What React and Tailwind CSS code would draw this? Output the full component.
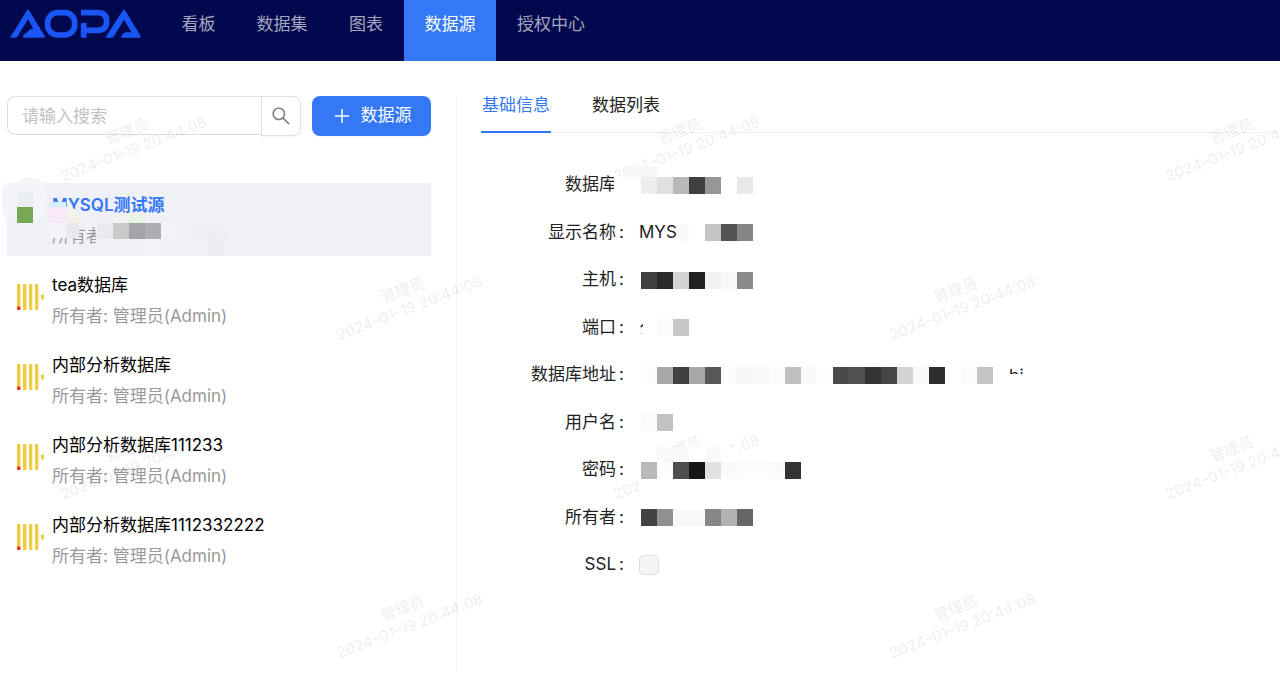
import { useState } from "react";
import { AiOutlinePlus, AiOutlineSearch } from "react-icons/ai";

const menus = [
  { name: "看板", width: "w-[75px]" },
  { name: "数据集", width: "w-[92px]" },
  { name: "图表", width: "w-[76px]" },
  { name: "数据源", width: "w-[92px]" },
  { name: "授权中心", width: "w-[110px]" },
];

const sources = [
  { id: 2, name: "tea数据库" },
  { id: 3, name: "内部分析数据库" },
  { id: 4, name: "内部分析数据库111233" },
  { id: 5, name: "内部分析数据库1112332222" },
];

const marks = [
  "left-[50px] top-[121px]",
  "left-[603px] top-[121px]",
  "left-[1155px] top-[121px]",
  "left-[326px] top-[280px]",
  "left-[879px] top-[280px]",
  "left-[50px] top-[439px]",
  "left-[603px] top-[439px]",
  "left-[1155px] top-[439px]",
  "left-[326px] top-[598px]",
  "left-[879px] top-[598px]",
];

// masked values, one class per block
const masks = {
  database: ["bg-[#eeeeee]", "bg-[#e0e0e0]", "bg-[#b8b8b8]", "bg-[#404040]", "bg-[#969696]", "bg-white", "bg-[#e8e8e8]"],
  name: ["bg-white", "bg-[#c4c4c4]", "bg-[#545454]", "bg-[#858585]"],
  host: ["bg-[#404040]", "bg-[#2a2a2a]", "bg-[#d4d4d4]", "bg-[#212121]", "bg-[#f2f2f2]", "bg-[#f8f8f8]", "bg-[#8a8a8a]"],
  port: ["bg-[#fbfbfb]", "bg-[#c8c8c8]"],
  url: [
    "bg-[#fcfcfc]", "bg-[#a8a8a8]", "bg-[#404040]", "bg-[#a8a8a8]", "bg-[#585858]", "bg-[#fcfcfc]",
    "bg-[#f7f7f7]", "bg-[#f9f9f9]", "bg-[#fcfcfc]", "bg-[#c1c1c1]", "bg-[#f9f9f9]", "bg-[#fefefe]",
    "bg-[#4a4a4a]", "bg-[#505050]", "bg-[#333333]", "bg-[#454545]", "bg-[#d3d3d3]", "bg-[#f9f9f9]",
    "bg-[#2d2d2d]", "bg-white", "bg-[#fbfbfb]", "bg-[#c4c4c4]", "bg-white",
  ],
  user: ["bg-[#fbfbfb]", "bg-[#c2c2c2]"],
  password: [
    "bg-[#b8b8b8]", "bg-[#fcfcfc]", "bg-[#4e4e4e]", "bg-[#161616]", "bg-[#e2e2e2]",
    "bg-[#fafafa]", "bg-[#fcfcfc]", "bg-[#fcfcfc]", "bg-[#fafafa]", "bg-[#333333]",
  ],
  owner: ["bg-[#434343]", "bg-[#909090]", "bg-[#f8f8f8]", "bg-[#f8f8f8]", "bg-[#868686]", "bg-[#b2b2b2]", "bg-[#666666]"],
};

function Logo() {
  return (
    <svg viewBox="30 26 397 90" className="h-[30px] w-[133px]" fill="#1a56f5" role="img" aria-label="AOPA">
      <path d="M32 112 L82 31 Q86 26 90 31 L136 107 Q138 112 133 112 H72 Q69 108 76 101 L88 92 Q90 86 102 85 L86 57 L55 107 Q52 112 47 112 Z" />
      <rect x="145" y="37" width="81" height="67" rx="30" fill="none" stroke="#1a56f5" strokeWidth="17" />
      <path d="M245 37 H295 Q322 37 322 63 Q322 90 295 90 H254 M253 68 V112" fill="none" stroke="#1a56f5" strokeWidth="17" />
      <path d="M318 112 L370 31 Q374 26 378 31 L424 107 Q426 112 421 112 H364 L370 102 Q373 96 380 96 H396 L374 58 L344 107 Q341 112 335 112 Z" />
    </svg>
  );
}

function SourceIcon() {
  return (
    <svg viewBox="0 0 27 26" className="mt-[21px] h-[26px] w-[27px] shrink-0" aria-hidden="true">
      <g fill="#f2cb45">
        <rect x="0" y="0" width="3.4" height="26" rx="1" />
        <rect x="6" y="0" width="3.4" height="26" rx="1" />
        <rect x="12" y="0" width="3.4" height="26" rx="1" />
        <rect x="18" y="0" width="3.4" height="26" rx="1" />
        <rect x="24" y="10.5" width="3" height="5" rx="1" />
      </g>
      <rect x="0" y="22.5" width="3.4" height="3.5" rx="1" fill="#e0352b" />
    </svg>
  );
}

function Mask({ cells }) {
  return (
    <div className="flex" aria-hidden="true">
      {cells.map((c, i) => (
        <span key={i} className={`h-[17px] w-4 ${c}`} />
      ))}
    </div>
  );
}

function Row({ label, htmlFor, children }) {
  return (
    <div className="flex items-center odd:h-[48px] even:h-[47px]">
      <label htmlFor={htmlFor} className="w-[135px] shrink-0 text-right">
        {label}
      </label>
      <span className="w-[23px] shrink-0 pl-[3px]">:</span>
      {children}
    </div>
  );
}

function SelectedSource() {
  return (
    <li className="relative h-[73px] bg-[#f0f1f6]">
      {/* masked icon */}
      <span className="absolute -top-[6px] left-[6px] size-[34px] rounded-full bg-[#f4f5f8]" />
      <span className="absolute top-0 -left-[5px] h-[35px] w-[43px] rounded-md bg-[#f4f5f8]" />
      <span className="absolute top-[8px] left-[10px] h-4 w-4 bg-[#ebeef3]" />
      <span className="absolute top-[24px] left-[10px] size-4 bg-[#76a855]" />
      <button className="relative block w-full pt-[7px] pl-[45px] text-left">
        <span className="block font-semibold leading-[31px] text-[#3478f6]">MYSQL测试源</span>
        <span className="block leading-[31px] text-[#999999]">所有者</span>
      </button>
      <span className="absolute top-[19px] left-[42px] h-[5px] w-[17px] bg-[#d4effe]" />
      <span className="absolute top-[24px] left-[42px] h-4 w-[17px] bg-[#f8e8fa]" />
      <span className="absolute top-[24px] left-[59px] h-4 w-[14px] rounded-tr-xl bg-[#f5f2ec]" />
      <span className="absolute top-[40px] left-[10px] h-[15px] w-[32px] bg-[#f1f2f6]" />
      <span className="absolute top-[40px] left-[42px] h-[15px] w-[17px] bg-[#f3f3f9]" />
      <span className="absolute top-[40px] left-[59px] h-[15px] w-[13px] bg-[#e8e9ed]" />
      <span className="absolute top-[40px] left-[89px] h-[30px] w-[17px] bg-[#f0f1f6]" />
      <span className="absolute top-[31px] left-[106px] h-[9px] w-4 bg-[#f3f0ee]" />
      <span className="absolute top-[31px] left-[122px] h-[9px] w-4 bg-[#e8f4e4]" />
      <div className="absolute top-[40px] left-[90px] flex" aria-hidden="true">
        <span className="h-4 w-4 bg-[#e9eaee]" />
        <span className="h-4 w-4 bg-[#c9c9cb]" />
        <span className="h-4 w-4 bg-[#a5a5a9]" />
        <span className="h-4 w-4 bg-[#adaeb1]" />
        <span className="h-4 w-4 bg-[#f3f3f7]" />
      </div>
      <span className="absolute top-[40px] left-[186px] h-4 w-8 bg-[#eeeff3]" />
      <span className="absolute top-[56px] left-[202px] h-4 w-4 bg-[#ebecf0]" />
      <span className="absolute top-[56px] left-[138px] h-4 w-4 bg-[#f2f3f7]" />
    </li>
  );
}

export default function App() {
  const [tab, setTab] = useState("info");
  const [search, setSearch] = useState("");

  const list = sources.filter((s) => s.name.includes(search));

  return (
    <div className="relative flex min-h-screen flex-col overflow-hidden bg-white font-['Inter','Noto_Sans_CJK_SC',sans-serif] text-[17px] text-[#222222]">
      <header className="flex h-[61px] bg-[#01084d] pl-[9px]">
        <div className="w-[152px] pt-[9px]">
          <Logo />
        </div>
        <nav className="flex">
          {menus.map((m) => (
            <a
              key={m.name}
              href="#"
              className={`${m.width} text-center leading-[48px] ${
                m.name === "数据源" ? "bg-[#3478f6] text-white" : "text-[#a4a6bd]"
              }`}
            >
              {m.name}
            </a>
          ))}
        </nav>
      </header>

      <main className="mt-[34px] mb-[2px] flex flex-1">
        <aside className="w-[457px] shrink-0 border-r border-[#f2f2f2] pt-px pr-[25px] pl-[7px]">
          <div className="flex gap-[11px]">
            <form className="flex min-w-0 flex-1" onSubmit={(e) => e.preventDefault()}>
              <input
                aria-label="搜索"
                value={search}
                onChange={(e) => setSearch(e.target.value)}
                placeholder="请输入搜索"
                className="h-[39px] min-w-0 flex-1 rounded-l-lg border border-r-0 border-[#dedede] px-[14px] outline-none placeholder:text-[#c2c2c2]"
              />
              <button
                aria-label="搜索"
                className="flex h-10 w-10 shrink-0 items-center justify-center rounded-r-lg border border-[#dedede] text-[#808080] shadow-xs"
              >
                <AiOutlineSearch size={22} />
              </button>
            </form>
            <button className="flex h-10 w-[119px] shrink-0 items-center justify-center gap-[9px] rounded-lg bg-[#3478f6] text-white shadow-xs">
              <AiOutlinePlus size={20} />
              数据源
            </button>
          </div>

          <ul className="mt-[47px] flex flex-col gap-[7px]">
            <SelectedSource />
            {list.map((s) => (
              <li key={s.id} className="h-[73px]">
                <button className="flex w-full pl-[10px] text-left">
                  <SourceIcon />
                  <span className="pt-[7px] pl-[8px] leading-[31px]">
                    <span className="block text-black">{s.name}</span>
                    <span className="block text-[#999999]">所有者: 管理员(Admin)</span>
                  </span>
                </button>
              </li>
            ))}
          </ul>
        </aside>

        <section className="ml-6 min-w-0 flex-1">
          <div className="flex h-[38px] gap-10 border-b border-[#f0f0f0]">
            <button
              onClick={() => setTab("info")}
              className={`h-[38px] w-[70px] border-b-2 pb-[16px] leading-[20px] ${
                tab === "info" ? "border-[#3478f6] text-[#3478f6]" : "border-transparent"
              }`}
            >
              基础信息
            </button>
            <button
              onClick={() => setTab("list")}
              className={`h-[38px] w-[70px] border-b-2 pb-[16px] leading-[20px] ${
                tab === "list" ? "border-[#3478f6] text-[#3478f6]" : "border-transparent"
              }`}
            >
              数据列表
            </button>
          </div>

          {tab === "info" && (
            <div className="relative z-10 pt-[28px]">
              <Row label="数据库">
                <div className="relative pl-[2px]">
                  <span className="absolute -top-[11px] -left-[14px] h-[11px] w-8 bg-[#f7f7f7]" />
                  <span className="absolute top-0 -left-[25px] h-[20px] w-[26px] bg-white" />
                  <Mask cells={masks.database} />
                </div>
              </Row>
              <Row label="显示名称">
                <span>MYS</span>
                <span className="h-[17px] w-[12px] bg-[#fafafa]" />
                <Mask cells={masks.name} />
              </Row>
              <Row label="主机">
                <div className="pl-[2px]">
                  <Mask cells={masks.host} />
                </div>
              </Row>
              <Row label="端口">
                <span className="h-[12px] w-[4px] overflow-hidden leading-[18px]">3</span>
                <div className="pl-[14px]">
                  <Mask cells={masks.port} />
                </div>
              </Row>
              <Row label="数据库地址">
                <div className="flex pl-[2px]">
                  <Mask cells={masks.url} />
                  <span className="h-[7px] overflow-hidden leading-[18px]">bi</span>
                </div>
              </Row>
              <Row label="用户名">
                <div className="pl-[2px]">
                  <Mask cells={masks.user} />
                </div>
              </Row>
              <Row label="密码">
                <div className="relative pl-[2px]">
                  <div className="absolute -top-[15px] left-[18px] flex">
                    <span className="h-[15px] w-8 bg-[#f9f9f9]" />
                    <span className="h-[15px] w-4 bg-white" />
                    <span className="h-[15px] w-4 bg-[#fafafa]" />
                    <span className="h-[15px] w-4 bg-white" />
                  </div>
                  <span className="absolute top-[17px] left-[2px] h-[16px] w-16 bg-white" />
                  <Mask cells={masks.password} />
                </div>
              </Row>
              <Row label="所有者">
                <div className="pl-[2px]">
                  <Mask cells={masks.owner} />
                </div>
              </Row>
              <Row label="SSL" htmlFor="ssl">
                <input
                  id="ssl"
                  type="checkbox"
                  className="size-5 appearance-none rounded-[5px] border border-[#dddddd] bg-[#f5f5f5] checked:bg-[#3478f6]"
                />
              </Row>
            </div>
          )}
        </section>
      </main>

      {/* watermark */}
      <div className="pointer-events-none absolute inset-0 overflow-hidden text-center text-[15px] leading-[19px] font-medium text-black/8 select-none" aria-hidden="true">
        {marks.map((m) => (
          <div key={m} className={`absolute w-[160px] -rotate-21 ${m}`}>
            管理员
            <br />
            2024–01–19 20:44:08
          </div>
        ))}
      </div>
    </div>
  );
}
